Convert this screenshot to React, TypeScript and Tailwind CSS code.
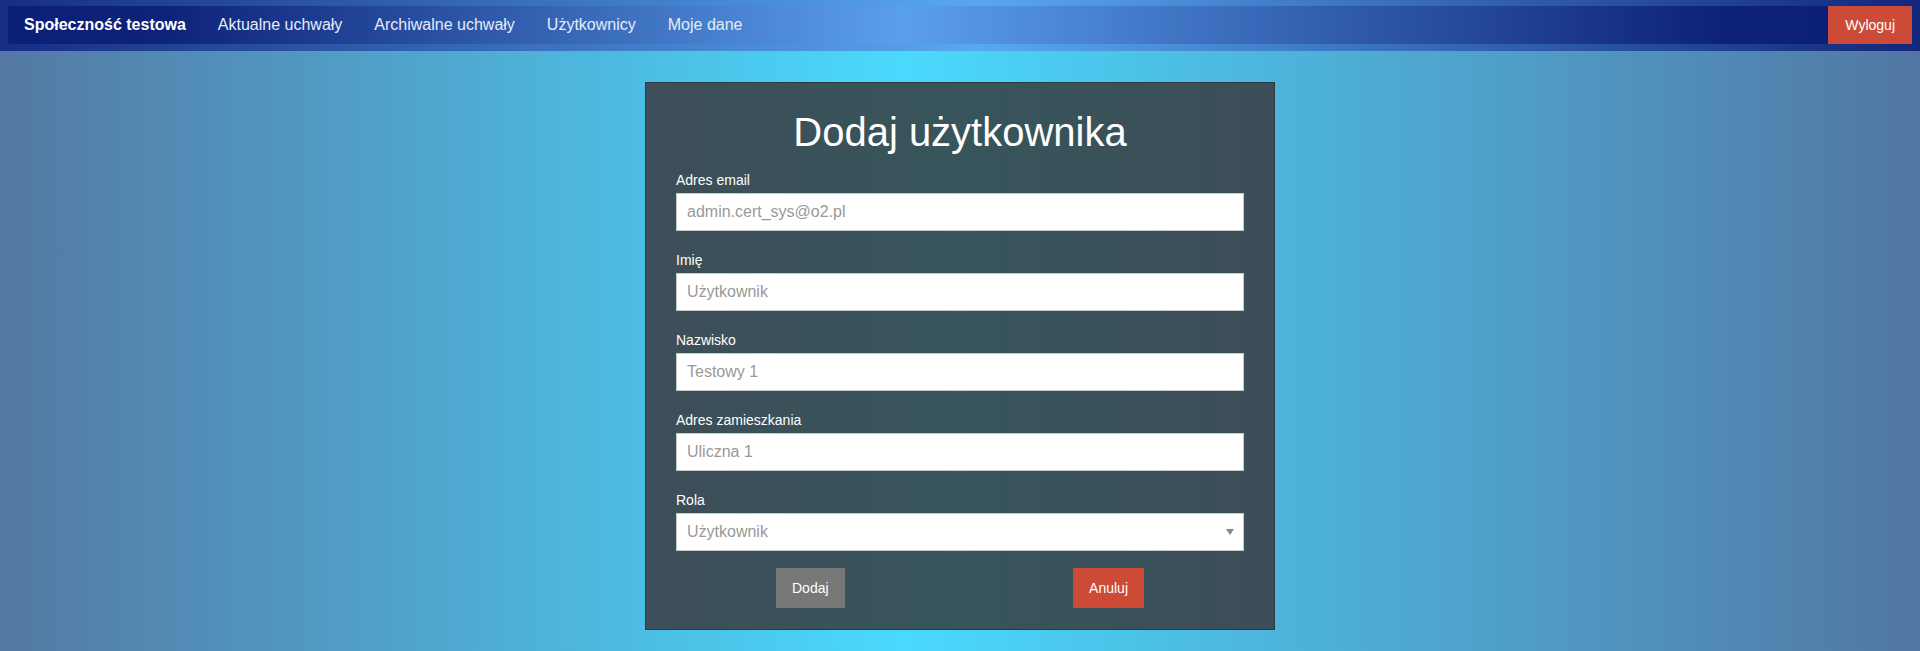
import type { ReactNode } from 'react';

const font = { fontFamily: '"Liberation Sans", Arial, sans-serif' };

function Field({ label, children }: { label: string; children: ReactNode }) {
  return (
    <div className="flex flex-col">
      <label className="mb-[3px] text-[14px] leading-5 text-white">{label}</label>
      {children}
    </div>
  );
}

function TextInput({ value }: { value: string }) {
  return (
    <input
      readOnly
      value={value}
      className="h-[38px] w-full border border-[#c8c8c8] bg-white px-[10px] text-[16px] text-[#999] outline-none"
    />
  );
}

export default function App() {
  const links = ['Aktualne uchwały', 'Archiwalne uchwały', 'Użytkownicy', 'Moje dane'];

  return (
    <div
      className="min-h-screen bg-[linear-gradient(to_right,#5478a3_0%,#4ad9fd_47%,#5276a3_100%)]"
      style={font}
    >
      <header className="h-[51px] bg-[linear-gradient(to_right,#172d85_0%,#58a8ee_51%,#12267e_100%)] px-2 pt-[6px]">
        <nav className="flex h-[38px] items-center bg-[linear-gradient(to_right,#0c1f78_0%,#0d2279_8%,#5a9fea_47%,#0d2179_90%,#0b1e78_100%)] pl-4">
          <div className="flex items-center gap-8 text-[16px]">
            <span className="font-bold text-white">Społeczność testowa</span>
            {links.map((l) => (
              <span key={l} className="text-[#e6ecf7]">
                {l}
              </span>
            ))}
          </div>
          <button className="ml-auto h-full bg-[#cc4a36] px-[17px] text-[14px] text-white">Wyloguj</button>
        </nav>
      </header>

      <main className="flex justify-center pt-[31px]">
        <div className="w-[630px] border border-[#2c3b41] bg-[linear-gradient(to_right,#3d4e58,#37555b_50%,#3d4d57)] px-[30px] pt-[27px] pb-[21px]">
          <h1 className="text-center text-[40px] leading-[44px] text-white">Dodaj użytkownika</h1>

          <form className="mt-4 flex flex-col gap-[19px]">
            <Field label="Adres email">
              <TextInput value="admin.cert_sys@o2.pl" />
            </Field>
            <Field label="Imię">
              <TextInput value="Użytkownik" />
            </Field>
            <Field label="Nazwisko">
              <TextInput value="Testowy 1" />
            </Field>
            <Field label="Adres zamieszkania">
              <TextInput value="Uliczna 1" />
            </Field>
            <Field label="Rola">
              <div className="relative">
                <select className="h-[38px] w-full appearance-none border border-[#c8c8c8] bg-white px-[10px] text-[16px] text-[#999] outline-none">
                  <option>Użytkownik</option>
                  <option>Administrator</option>
                </select>
                <svg
                  className="pointer-events-none absolute right-[10px] top-[16px]"
                  width="8"
                  height="6"
                  viewBox="0 0 8 6"
                >
                  <path d="M0 0h8L4 6z" fill="#888" />
                </svg>
              </div>
            </Field>
          </form>

          <div className="mt-[17px] flex justify-between px-[100px]">
            <button className="h-10 bg-[#777] px-4 text-[14px] text-white">Dodaj</button>
            <button className="h-10 bg-[#cc4a36] px-4 text-[14px] text-white">Anuluj</button>
          </div>
        </div>
      </main>
    </div>
  );
}
